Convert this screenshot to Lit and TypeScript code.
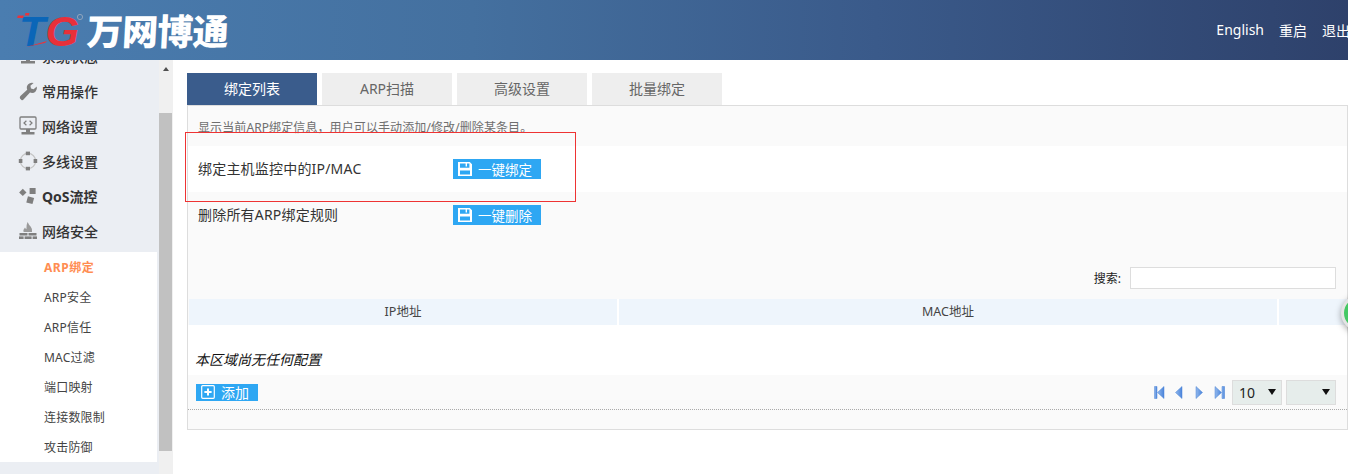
import { LitElement, html, css, svg } from "lit";
import { customElement } from "lit/decorators.js";

const grey = "#7f7f7f";
const icons: Record<string, unknown> = {
  monitor: svg`<rect x="2" y="1" width="16" height="11" rx="1" fill="none" stroke="${grey}" stroke-width="1.6"/><rect x="8" y="12" width="4" height="3" fill="${grey}"/><rect x="3" y="15" width="14" height="2.5" fill="${grey}"/>`,
  wrench: svg`<path d="M2 17.5 L3.5 19 Q4.5 19.6 5.5 18.6 L12 11.6 Q15.5 12.6 17.6 10.4 Q19.4 8.4 18.8 5.4 L15.6 8.2 L13 7.4 L12.4 4.8 L15.6 2 Q12.4 1 10.2 3.2 Q8 5.6 9.2 8.8 L2.4 15 Q1.4 16.2 2 17.5 Z" fill="${grey}"/>`,
  net: svg`<rect x="2" y="1" width="16" height="12" rx="1" fill="none" stroke="${grey}" stroke-width="1.3"/><path d="M8.4 4.8 L6 7 L8.4 9.2 M11.6 4.8 L14 7 L11.6 9.2" fill="none" stroke="${grey}" stroke-width="1.2"/><rect x="8" y="13" width="4" height="3" fill="${grey}"/><rect x="3.5" y="16" width="13" height="2.5" fill="${grey}"/>`,
  ring: svg`<circle cx="10" cy="10" r="7.6" fill="none" stroke="#c4c4c4" stroke-width="1.3"/><g fill="${grey}"><rect x="7.8" y="0.6" width="4.2" height="3.6"/><rect x="7.8" y="15.8" width="4.2" height="3.6"/><rect x="0.8" y="8" width="3.6" height="4"/><rect x="15.6" y="8" width="3.6" height="4"/></g>`,
  qos: svg`<g fill="${grey}"><rect x="2.2" y="3.8" width="5.2" height="5.2" transform="rotate(45 4.8 6.4)"/><rect x="11.6" y="2" width="6" height="6"/><rect x="9" y="11" width="6.4" height="6.4" transform="rotate(15 12.2 14.2)"/></g>`,
  fire: svg`<path d="M9.6 1 Q11 4 12.6 5.6 Q14.6 8 14 11 L5.6 11 Q5 8.6 7 6.6 Q7.4 8 8.4 8.2 Q8 4.4 9.6 1 Z" fill="#9a9a9a"/><g fill="${grey}"><rect x="1.5" y="12" width="8" height="2.5"/><rect x="10.5" y="12" width="8" height="2.5"/><rect x="1" y="15.4" width="4.6" height="2.6"/><rect x="6.6" y="15.4" width="7" height="2.6"/><rect x="14.6" y="15.4" width="4.4" height="2.6"/></g>`,
};

const floppy = html`<svg class="btn-ico" viewBox="0 0 14 14" aria-hidden="true"><path fill-rule="evenodd" d="M0 0 H11.8 L14 2.2 V14 H0 Z M2 1.6 V5.8 H11.4 V1.6 H9 V4.4 H7.6 V1.6 Z M2 8.4 V12.4 H12 V8.4 Z" fill="#fff"/></svg>`;

const pagerIcon = (pts: string[]) => html`<svg class="pg" viewBox="0 0 11 13" aria-hidden="true">${pts.map((p) => svg`<polygon points="${p}" fill="url(#pgfill)" stroke="#4a82d4" stroke-width="0.5"/>`)}</svg>`;

@customElement("app-root")
export class AppRoot extends LitElement {
  static styles = css`
    :host { display: block; width: 1348px; height: 474px; overflow: hidden; position: relative; background: #fff;
      font-family: "Noto Sans", "Noto Sans CJK SC", sans-serif; color: #333; }
    .defs { position: absolute; width: 0; height: 0; }
    .top { height: 60px; display: flex; align-items: center; justify-content: space-between; overflow: hidden;
      background: linear-gradient(90deg, #4a7db0 0%, #44709f 35%, #3a5a8a 65%, #2e416b 100%); }
    .logo { display: flex; align-items: center; padding-left: 17px; height: 60px; }
    .mark { width: 70px; height: 60px; display: block; flex: none; }
    .tg { font-family: "Liberation Sans", sans-serif; font-weight: 700; font-style: italic; font-size: 42px; }
    .brand { font-family: "Noto Sans CJK SC", sans-serif; font-weight: 900; font-size: 36px; line-height: 44px; color: #fff;
      letter-spacing: -0.7px; margin: -3px 0 0 0; transform: skewX(-3deg); }
    .nav { display: flex; gap: 15px; margin-right: -2px; font-size: 14px; color: #fff; }
    .body { display: flex; height: 414px; }
    .side { width: 159px; height: 414px; overflow: hidden; background: #ebeef3; flex: none; }
    .menu-list { margin-top: -22px; }
    .m { height: 35px; display: flex; align-items: center; padding-left: 18px; gap: 4px; font-size: 14px; font-weight: 500; color: #333; }
    .m svg { width: 20px; height: 20px; flex: none; }
    .m.bold { font-weight: 700; }
    .sub { width: 157px; background: #fff; margin-top: 4px; }
    .s { height: 30px; line-height: 32px; padding-left: 44px; font-size: 12px; color: #444; letter-spacing: 0.2px; }
    .s.on { color: #ff8d52; font-weight: 700; letter-spacing: 0.5px; }
    .track { width: 14px; height: 414px; background: #f0f0f0; flex: none; display: flex; flex-direction: column; align-items: center; }
    .arrow { width: 0; height: 0; margin-top: 7px; border-left: 3.5px solid transparent; border-right: 3.5px solid transparent; border-bottom: 4px solid #505050; }
    .thumb { width: 13px; height: 338px; margin: 42px 1px 0 0; background: #c1c1c1; }
    .main { flex: 1; padding: 13px 0 0 14px; min-width: 0; }
    .tabs { display: flex; gap: 5px; height: 32px; }
    .tab { width: 130px; background: #eee; color: #666; font-size: 14px; text-align: center; line-height: 32px; }
    .tab.on { background: #3a5c8c; color: #fff; }
    .panel { border: 1px solid #ddd; background: #fafafa; box-sizing: border-box; height: 325px; }
    .desc { height: 40px; padding-left: 10px; font-size: 12px; line-height: 44px; color: #6f6f6f; letter-spacing: 0.1px; }
    .row { display: flex; align-items: center; padding-left: 10px; font-size: 14px; height: 46px; color: #333; }
    .row.white { background: #fff; }
    .lbl { width: 255px; margin-bottom: 2px; letter-spacing: 0.2px; }
    .btn { display: flex; align-items: center; height: 20px; background: #2ea7f3; color: #fff; font-size: 13.5px; box-sizing: border-box; }
    .btn.wide { width: 88px; padding-left: 5px; gap: 6px; }
    .btn-ico { width: 14px; height: 14px; flex: none; }
    .search { display: flex; justify-content: flex-end; align-items: center; height: 60px; padding: 20px 11px 0 0; box-sizing: border-box; gap: 9px; font-size: 12px; color: #222; }
    .input { width: 206px; height: 22px; background: #fff; border: 1px solid #ddd; box-sizing: border-box; }
    .thead { display: flex; gap: 2px; height: 26px; margin: 1px 0 0 1px; background: #fff; }
    .th { background: #eef5fc; font-size: 12.5px; line-height: 26px; text-align: center; color: #444; }
    .tbody { height: 50px; background: #fff; box-sizing: border-box; padding: 26px 0 0 7px; font-size: 14px; line-height: 18px; font-style: italic; color: #111; }
    .foot { height: 34px; display: flex; align-items: center; justify-content: space-between; padding: 0 11px 0 8px; border-bottom: 1px dotted #aaa; }
    .btn.add { width: 62px; height: 17px; padding-left: 5px; gap: 6px; font-size: 14px; }
    .add-ico { width: 14px; height: 14px; flex: none; }
    .pager { display: flex; align-items: center; }
    .pg { width: 11px; height: 13px; flex: none; margin-right: 9px; }
    .sel { height: 25px; width: 50px; box-sizing: border-box; background: #e6edeb; border: 1px solid #ddd; display: flex; align-items: center;
      padding: 0 5px 0 6px; font-size: 14px; color: #222; margin: 0 0 0 4px; }
    .pg + .sel { margin-left: -2px; }
    .caret { width: 0; height: 0; border-left: 4px solid transparent; border-right: 4px solid transparent; border-top: 6px solid #111; margin-left: auto; }
    .mark-red { position: absolute; left: 185px; top: 132px; width: 391px; height: 70px; box-sizing: border-box; border: 1px solid #e33; pointer-events: none; }
    .ball { position: absolute; left: 1341px; top: 295px; width: 36px; height: 36px; box-sizing: border-box; border-radius: 50%;
      background: #45c864; border: 3px solid #e4e4e4; box-shadow: 0 2px 6px rgba(0,0,0,.35); }
  `;

  render() {
    const items = [
      ["monitor", "系统状态", ""],
      ["wrench", "常用操作", ""],
      ["net", "网络设置", ""],
      ["ring", "多线设置", ""],
      ["qos", "QoS流控", "bold"],
      ["fire", "网络安全", ""],
    ];
    const subs = ["ARP绑定", "ARP安全", "ARP信任", "MAC过滤", "端口映射", "连接数限制", "攻击防御"];
    const tabs = ["绑定列表", "ARP扫描", "高级设置", "批量绑定"];
    const cols = [["IP地址", 428], ["MAC地址", 658], ["", 68]] as [string, number][];
    return html`
      <svg class="defs" aria-hidden="true"><defs>
        <linearGradient id="pgfill" x1="0" y1="0" x2="1" y2="0"><stop offset="0" stop-color="#93b9ec"/><stop offset="1" stop-color="#4a84dc"/></linearGradient>
      </defs></svg>
      <header class="top">
        <div class="logo">
          <svg class="mark" viewBox="0 0 70 60" aria-hidden="true">
            <text class="tg" x="2" y="46" textLength="60" lengthAdjust="spacingAndGlyphs"><tspan fill="#0b66b8">T</tspan><tspan fill="#e8303a">G</tspan></text>
            <rect x="1" y="15.5" width="6" height="2.5" fill="#e8343c" transform="skewX(-15) translate(4 0)"/>
            <rect x="8" y="13" width="4" height="2.5" fill="#e8343c" transform="skewX(-15) translate(4 0)"/>
            <path d="M9 47 L30 41 L28 43 Z" fill="#e8343c"/>
            <circle cx="63" cy="17" r="2.6" fill="none" stroke="#8fa4bd" stroke-width="1"/>
          </svg>
          <div class="brand">万网博通</div>
        </div>
        <nav class="nav"><span>English</span><span>重启</span><span>退出</span></nav>
      </header>
      <div class="body">
        <aside class="side">
          <div class="menu-list">
            ${items.map(([ic, t, c]) => html`<div class="m ${c}"><svg viewBox="0 0 20 20" aria-hidden="true">${icons[ic]}</svg><span>${t}</span></div>`)}
          </div>
          <div class="sub">
            ${subs.map((t, i) => html`<div class="s ${i === 0 ? "on" : ""}">${t}</div>`)}
          </div>
        </aside>
        <div class="track"><div class="arrow"></div><div class="thumb"></div></div>
        <main class="main">
          <div class="tabs">${tabs.map((t, i) => html`<div class="tab ${i === 0 ? "on" : ""}">${t}</div>`)}</div>
          <section class="panel">
            <div class="desc">显示当前ARP绑定信息，用户可以手动添加/修改/删除某条目。</div>
            <div class="row white"><span class="lbl">绑定主机监控中的IP/MAC</span><div class="btn wide">${floppy}<span>一键绑定</span></div></div>
            <div class="row"><span class="lbl">删除所有ARP绑定规则</span><div class="btn wide">${floppy}<span>一键删除</span></div></div>
            <div class="search"><span>搜索:</span><div class="input"></div></div>
            <div class="thead">${cols.map(([t, w]) => html`<div class="th" style="width:${w}px">${t}</div>`)}</div>
            <div class="tbody">本区域尚无任何配置</div>
            <div class="foot">
              <div class="btn add">
                <svg class="add-ico" viewBox="0 0 14 14" aria-hidden="true"><rect x="0.7" y="0.7" width="12.6" height="12.6" rx="1" fill="none" stroke="#fff" stroke-width="1.2"/><path d="M7 3.4 V10.6 M3.4 7 H10.6" stroke="#fff" stroke-width="2"/></svg>
                <span>添加</span>
              </div>
              <div class="pager">
                ${pagerIcon(["0.5,0.5 3,0.5 3,12.5 0.5,12.5", "10,0.5 10,12.5 3.5,6.5"])}
                ${pagerIcon(["8,0.5 8,12.5 1.5,6.5"])}
                ${pagerIcon(["2,0.5 2,12.5 8.5,6.5"])}
                ${pagerIcon(["1,0.5 1,12.5 7.5,6.5", "8,0.5 10.5,0.5 10.5,12.5 8,12.5"])}
                <div class="sel"><span>10</span><i class="caret"></i></div>
                <div class="sel"><i class="caret"></i></div>
              </div>
            </div>
          </section>
        </main>
      </div>
      <div class="mark-red"></div>
      <div class="ball"></div>
    `;
  }
}
